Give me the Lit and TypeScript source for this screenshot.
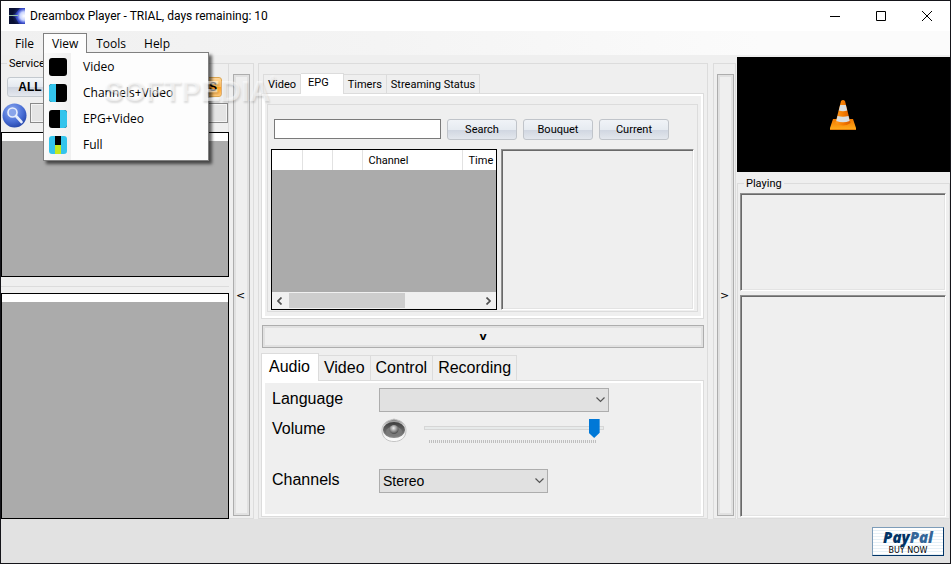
import { LitElement, html, css, svg, nothing } from "lit";
import { customElement, state } from "lit/decorators.js";
import { classMap } from "lit/directives/class-map.js";

const viewItems = [
  { label: "Video", icon: svg`<rect width="18" height="18" rx="3" fill="#000"/>` },
  {
    label: "Channels+Video",
    icon: svg`<rect width="18" height="18" rx="3" fill="#000"/><path d="M3 0h4v18H3a3 3 0 0 1-3-3V3a3 3 0 0 1 3-3z" fill="#33c4ec"/>`,
  },
  {
    label: "EPG+Video",
    icon: svg`<rect width="18" height="18" rx="3" fill="#000"/><path d="M11 0h4a3 3 0 0 1 3 3v12a3 3 0 0 1-3 3h-4z" fill="#33c4ec"/>`,
  },
  {
    label: "Full",
    icon: svg`<rect width="18" height="18" rx="3" fill="#33c4ec"/><path d="M6 0h6v9H6z" fill="#000"/><path d="M6 9h6v9H6z" fill="#c4e81e"/>`,
  },
];

const chevron = html`<svg class="chev" width="9" height="6" viewBox="0 0 9 6"><path d="M.5 .5l4 4 4-4" fill="none" stroke="#555" stroke-width="1.2"/></svg>`;

@customElement("app-root")
export class AppRoot extends LitElement {
  @state() private epgTab = "EPG";
  @state() private settingsTab = "Audio";
  @state() private menuOpen = true;

  static styles = css`
    :host { display: block; }
    * { box-sizing: border-box; }
    button, input, select { font: inherit; color: inherit; margin: 0; padding: 0; border-radius: 0; }
    button { background: none; border: 0; white-space: nowrap; }
    svg { display: block; flex: none; }
    fieldset { margin: 0; min-width: 0; border: 1px solid #dcdcdc; padding: 0; }
    legend { padding: 0 2px; margin-left: 6px; line-height: 13px; }

    .window {
      position: relative; display: flex; flex-direction: column; min-height: 100vh;
      border: 1px solid #15151a; background: #efefef; color: #000;
      font: 11px/13px Roboto, "Liberation Sans", sans-serif;
    }
    .titlebar {
      display: flex; align-items: center; height: 30px; padding-left: 8px; background: #fff;
      font: 12px/16px Roboto, "Liberation Sans", sans-serif;
    }
    .title { flex: 1; margin: 0 0 0 5px; font: inherit; }
    .caption { display: grid; place-items: center; width: 46px; height: 30px; }
    .menubar {
      display: flex; height: 24px; padding: 2px 5px;
      background: linear-gradient(90deg, #f0f0f0, #f4f4f4 40%, #fbfbfb 80%);
      font: 12px/16px "Open Sans", "Noto Sans", sans-serif;
    }
    .menu { position: relative; }
    .menu-title { height: 20px; padding: 0 8px; border: 1px solid transparent; border-width: 1px 1px 0; }
    .menu-title.open { background: #fdfdfd; border-color: #808080; position: relative; z-index: 3; }
    .dropdown {
      position: absolute; z-index: 2; left: 0; top: 19px; width: 166px; padding: 1px 0 2px;
      border: 1px solid #808080; box-shadow: 3px 3px 3px #0009;
      background: linear-gradient(90deg, #fafafa, #f0f0f0 27px, #fdfdfd 27px);
    }
    .dropdown button { display: flex; align-items: center; gap: 16px; width: 100%; height: 26px; padding-left: 5px; }
    .watermark {
      position: absolute; z-index: 4; left: 103px; top: 74px; pointer-events: none;
      font: bold 29px/32px "Liberation Sans", sans-serif; color: #ffffff80; text-shadow: 1px 2px 2px #0002;
    }
    .watermark sup { font-size: 8px; line-height: 8px; vertical-align: top; }

    .body { flex: 1; display: grid; grid-template-columns: 253px minmax(0, 1fr) 24px minmax(0, 214px); }
    .left { display: flex; }
    .services { flex: 1; display: flex; flex-direction: column; }
    .services-group { margin-top: 2px; border-width: 1px 1px 0 0; }
    .services-group .grid { height: 145px; margin-right: -1px; }
    .filters { display: flex; justify-content: space-between; padding: 7px 6px 0; }
    .filter {
      width: 46px; height: 20px; border: 1px solid #c3c9cf; border-radius: 3px;
      background: linear-gradient(#f3f6f9, #e4e9f0 50%, #cdd3df 50%, #e4e8ee);
      font: bold 12px/18px "Liberation Sans", sans-serif;
    }
    .filter.hot { border-color: #dca650; background: linear-gradient(#ffd699, #ffbb55 50%, #ff9e1c 50%, #ffc978); text-align: right; padding-right: 4px; }
    .find { display: flex; align-items: flex-start; gap: 3px; padding: 6px 0 4px 1px; }
    .find input { flex: 1; min-width: 0; height: 20px; border: 1px solid #8a8a8a; background: #e4e4e4; box-shadow: inset 0 0 0 1px #f4f4f4; }
    .find button { height: 25px; }
    .grid { flex: 1; display: flex; flex-direction: column; background: #ababab; border: 1px solid #000; }
    .grid-head { height: 8px; background: #fff; }
    .channels { flex: 1; display: flex; flex-direction: column; margin-top: 9px; border-top: 1px solid #dcdcdc; padding-top: 6px; }

    .splitter { display: flex; margin-top: 8px; border: 1px solid #dcdcdc; border-left: 0; padding: 10px 3px 2px 4px; }
    .splitter.right { border: 1px solid #dcdcdc; padding: 10px 2px 2px 3px; }
    .bar {
      flex: 1; width: 17px; background: #efefef; border: 1px solid #adadad; box-shadow: inset 0 0 0 2px #e1e1e1;
      font: 11px/13px "DejaVu Sans", sans-serif;
    }
    .splitter .bar { padding-right: 2px; }
    .wide { flex: none; width: auto; height: 23px; margin: 6px 0 5px 1px; font-weight: bold; }

    .center { display: flex; flex-direction: column; margin: 8px 4px 0; border: 1px solid #dcdcdc; padding: 9px 3px 1px 2px; }
    .tabs { display: flex; align-items: flex-end; padding-left: 2px; }
    .tab { height: 19px; padding: 0 4px; border: 1px solid #dcdcdc; border-width: 1px 1px 0 0; }
    .tab:first-child { border-left-width: 1px; }
    .tab.active {
      position: relative; z-index: 1; height: 21px; margin-bottom: -1px; padding: 0 14px 3px 7px; background: #fff;
    }
    .tab-page { border: 1px solid #dcdcdc; box-shadow: inset 3px 0 #fff, inset 0 2px #fff, inset -2px -2px #fff; }
    .epg { height: 226px; padding: 10px 5px 6px; }
    .epg-inner { height: 100%; display: flex; flex-direction: column; gap: 9px; border: 1px solid #dcdcdc; padding: 14px 3px 1px; }
    .epg-search { display: flex; gap: 6px; padding-left: 3px; }
    .epg-search input { width: 167px; height: 20px; border: 1px solid #7a7a7a; background: #fff; }
    .push {
      width: 70px; height: 21px; border: 1px solid #c0c4ca; border-radius: 3px;
      background: linear-gradient(#f0f3f7, #e6ebf1 50%, #cfd5e0 50%, #e3e7ed);
    }
    .epg-split { flex: 1; display: flex; gap: 4px; }
    .epg-grid { flex: 0 0 226px; }
    table { border-collapse: collapse; table-layout: fixed; width: 100%; height: 20px; background: #fff; }
    th { padding: 0 0 0 6px; font-weight: normal; text-align: left; border-right: 1px solid #e2e2e2; white-space: nowrap; }
    th:last-child { border-right: 0; }
    .c1 { width: 30px; } .c2 { width: 100px; }
    .hscroll { display: flex; align-items: center; height: 17px; margin-top: auto; background: #f0f0f0; padding: 0 5px; }
    .hscroll-thumb { width: 116px; height: 15px; margin: 0 auto 0 7px; background: #cdcdcd; }
    .sunken { flex: 1; background: #efefef; border: 1px solid #a0a0a0; border-color: #8f8f8f #fff #fff #8f8f8f; box-shadow: inset 1px 1px #696969, inset -1px -1px #e3e3e3; }

    .settings { display: flex; flex-direction: column; flex: 1; font: 16px/20px "Liberation Sans", sans-serif; }
    .settings .tabs { padding-left: 0; }
    .settings .tab { height: 25px; padding: 0 5px; }
    .settings .tab.active { height: 28px; padding: 0 8px 1px 7px; }
    .form { flex: 1; display: grid; grid-template-columns: 107px minmax(0, 1fr); grid-template-rows: 30px 51px 30px; align-items: start; padding: 7px 10px; }
    .form label { line-height: 22px; }
    .combo { display: grid; align-items: center; width: 230px; }
    .combo.short { width: 169px; }
    .combo select {
      grid-area: 1 / 1; width: 100%; height: 24px; padding: 0 3px; appearance: none;
      background: #e1e1e1; border: 1px solid #adadad; font-size: 14px;
    }
    .chev { grid-area: 1 / 1; justify-self: end; margin-right: 4px; pointer-events: none; }
    .volume { display: flex; align-items: flex-start; gap: 17px; padding-left: 2px; }
    .slider { width: 180px; }
    .slider input { display: block; width: 100%; height: 20px; appearance: none; background: none; }
    .slider input::-webkit-slider-runnable-track { height: 4px; background: #e7eaea; border: 1px solid #d6d6d6; }
    .slider input::-webkit-slider-thumb {
      appearance: none; width: 11px; height: 19px; margin-top: -8px; background: #0078d7;
      clip-path: polygon(0 0, 100% 0, 100% 72%, 50% 100%, 0 72%);
    }
    .ticks { height: 3px; margin: 2px 7px 0 5px; background: repeating-linear-gradient(90deg, #bfbfbf 0 1px, transparent 1px 2px); }

    .right { display: flex; flex-direction: column; margin-left: 1px; }
    .video { display: grid; place-items: center; height: 115px; margin-top: 2px; padding-right: 2px; background: #000; }
    .playing { flex: 1; display: flex; flex-direction: column; margin-top: 5px; }
    .playing legend { margin-left: 6px; }
    .playing-inner { flex: 1; display: flex; flex-direction: column; gap: 4px; padding: 3px 3px 1px 2px; }
    .now { flex: 0 0 98px; }

    .footer { display: flex; justify-content: flex-end; align-items: flex-start; height: 44px; padding: 8px 6px; background: #e2e2e2; }
    .paypal {
      display: flex; flex-direction: column; align-items: center; width: 72px; height: 29px;
      border: 1px solid #1d4d7d; border-color: #7e9db9 #003366 #003366 #7e9db9;
      background: repeating-linear-gradient(#fff 0 2px, #e6f0f6 2px 3px); text-decoration: none; color: #000;
      font: 8px/9px "DejaVu Sans", sans-serif;
    }
    .paypal strong { font: italic 800 15px/18px "Open Sans", sans-serif; color: #003366; }
    .paypal strong span { color: #336699; }
  `;

  private tabs(names: string[], current: string, pick: (n: string) => void) {
    return html`<div class="tabs" role="tablist">
      ${names.map(
        (n) => html`<button role="tab" class=${classMap({ tab: true, active: n === current })}
          aria-selected=${n === current ? "true" : "false"} @click=${() => pick(n)}>${n}</button>`
      )}
    </div>`;
  }

  private viewMenu() {
    return html`<div class="dropdown" role="menu">
      ${viewItems.map(
        (i) => html`<button role="menuitem"><svg width="18" height="18">${i.icon}</svg>${i.label}</button>`
      )}
    </div>`;
  }

  render() {
    return html`<div class="window">
      <header class="titlebar">
        <svg width="16" height="16" viewBox="0 0 16 16">
          <defs><radialGradient id="glow" cx=".95" cy=".5" r=".75"><stop offset="0" stop-color="#fff"/><stop offset=".35" stop-color="#c8d4ff"/><stop offset=".6" stop-color="#3c50d0"/><stop offset="1" stop-color="#0a1038"/></radialGradient></defs>
          <rect width="16" height="16" fill="url(#glow)"/><path d="M0 7h9v1H0z" fill="#9cc8a8"/><path d="M0 0h11L6 6H0zM0 9h6l4 7H0z" fill="#081030" opacity=".6"/>
        </svg>
        <h1 class="title">Dreambox Player - TRIAL, days remaining: 10</h1>
        <button class="caption" aria-label="Minimize"><svg width="10" height="10"><path d="M0 5.5h10" stroke="#000"/></svg></button>
        <button class="caption" aria-label="Maximize"><svg width="10" height="10"><path d="M.5 .5h9v9h-9z" fill="none" stroke="#000"/></svg></button>
        <button class="caption" aria-label="Close"><svg width="10" height="10"><path d="M0 0l10 10M10 0L0 10" stroke="#000"/></svg></button>
      </header>
      <nav class="menubar">
        ${["File", "View", "Tools", "Help"].map((m) => {
          const open = m === "View" && this.menuOpen;
          return html`<div class="menu">
            <button class=${classMap({ "menu-title": true, open })}
              @click=${() => { if (m === "View") this.menuOpen = !this.menuOpen; }}>${m}</button>
            ${open ? this.viewMenu() : nothing}
          </div>`;
        })}
      </nav>
      <main class="body">
        <section class="left">
          <div class="services">
            <fieldset class="services-group">
              <legend>Services</legend>
              <div class="filters"><button class="filter">ALL</button><button class="filter hot">S</button></div>
              <div class="find">
                <button aria-label="Find service">
                  <svg width="25" height="25" viewBox="0 0 25 25">
                    <defs><radialGradient id="orb" cx=".4" cy=".3" r=".75"><stop offset="0" stop-color="#8eabf0"/><stop offset=".6" stop-color="#4a6fd6"/><stop offset="1" stop-color="#2343a8"/></radialGradient></defs>
                    <circle cx="12.5" cy="12.5" r="12" fill="url(#orb)"/>
                    <circle cx="10.5" cy="9.5" r="4.5" fill="#8aa5ea" stroke="#e8eefc" stroke-width="1.6"/>
                    <path d="M14 13l5.5 6" stroke="#e8eefc" stroke-width="2.6" stroke-linecap="round"/>
                  </svg>
                </button>
                <input type="text" aria-label="Service name" />
              </div>
              <div class="grid"><div class="grid-head"></div></div>
            </fieldset>
            <div class="channels"><div class="grid"><div class="grid-head"></div></div></div>
          </div>
          <div class="splitter"><button class="bar">&lt;</button></div>
        </section>

        <section class="center">
          ${this.tabs(["Video", "EPG", "Timers", "Streaming Status"], this.epgTab, (n) => (this.epgTab = n))}
          <div class="tab-page epg">
            <div class="epg-inner">
              <div class="epg-search">
                <input type="text" aria-label="Search programmes" />
                <button class="push">Search</button><button class="push">Bouquet</button><button class="push">Current</button>
              </div>
              <div class="epg-split">
                <div class="grid epg-grid">
                  <table>
                    <colgroup><col class="c1" /><col class="c1" /><col class="c1" /><col class="c2" /><col /></colgroup>
                    <thead><tr><th></th><th></th><th></th><th scope="col">Channel</th><th scope="col">Time</th></tr></thead>
                  </table>
                  <div class="hscroll">
                    <svg width="5" height="8" viewBox="0 0 5 8"><path d="M4.5 .5L1 4l3.500 3.500" fill="none" stroke="#505050" stroke-width="1.700"/></svg>
                    <div class="hscroll-thumb"></div>
                    <svg width="5" height="8" viewBox="0 0 5 8"><path d="M.5 .5L4 4 .5 7.500" fill="none" stroke="#505050" stroke-width="1.700"/></svg>
                  </div>
                </div>
                <div class="sunken"></div>
              </div>
            </div>
          </div>
          <button class="bar wide">v</button>
          <div class="settings">
            ${this.tabs(["Audio", "Video", "Control", "Recording"], this.settingsTab, (n) => (this.settingsTab = n))}
            <div class="tab-page form">
              <label for="language">Language</label>
              <div class="combo"><select id="language"><option></option></select>${chevron}</div>
              <label for="volume">Volume</label>
              <div class="volume">
                <svg width="26" height="26" viewBox="0 0 26 26">
                  <defs>
                    <linearGradient id="rim" x2="0" y2="1"><stop offset="0" stop-color="#777"/><stop offset=".3" stop-color="#ddd"/><stop offset="1" stop-color="#fff"/></linearGradient>
                    <linearGradient id="well" x2="0" y2="1"><stop offset="0" stop-color="#3c3c3c"/><stop offset="1" stop-color="#8c8c8c"/></linearGradient>
                    <radialGradient id="dome" cx=".45" cy=".35" r=".6"><stop offset="0" stop-color="#eee"/><stop offset="1" stop-color="#555"/></radialGradient>
                  </defs>
                  <path d="M8 2.500l5-1.500 5 1.500c5 2 7 5.500 7 10 0 7-5 11-12 11S1 19.500 1 12.500C1 8 3 4.500 8 2.500z" fill="url(#rim)" stroke="#c4c4c4"/>
                  <ellipse cx="13" cy="12" rx="11" ry="8" fill="url(#well)"/>
                  <ellipse cx="13" cy="13.500" rx="8" ry="5" fill="#7a7a7a"/>
                  <circle cx="13" cy="11.500" r="4.500" fill="url(#dome)"/>
                </svg>
                <div class="slider">
                  <input id="volume" type="range" min="0" max="100" .value=${"98"} />
                  <div class="ticks"></div>
                </div>
              </div>
              <label for="channels">Channels</label>
              <div class="combo short"><select id="channels"><option>Stereo</option></select>${chevron}</div>
            </div>
          </div>
        </section>

        <div class="splitter right"><button class="bar">&gt;</button></div>

        <section class="right">
          <div class="video">
            <svg width="28" height="32" viewBox="0 0 28 32">
              <defs>
                <linearGradient id="cone"><stop offset="0" stop-color="#ff9a1e"/><stop offset=".5" stop-color="#f57c00"/><stop offset="1" stop-color="#d85a00"/></linearGradient>
                <linearGradient id="base" x2="0" y2="1"><stop offset="0" stop-color="#f07800"/><stop offset=".9" stop-color="#ffa81a"/><stop offset="1" stop-color="#c86000"/></linearGradient>
              </defs>
              <path d="M4 20h20l3 9v2H1v-2z" fill="url(#base)"/>
              <path d="M6.500 24L12 2q2-2 4 0l5.500 22q-7.500 5-15 0z" fill="url(#cone)"/>
              <path d="M11.200 6h5.600l1.400 5.500q-4.200 1.500-8.400 0zM8.500 17q5.500 1.500 11 0l1.200 5q-6.700 2.500-13.400 0z" fill="#d9dde0"/>
            </svg>
          </div>
          <fieldset class="playing">
            <legend>Playing</legend>
            <div class="playing-inner"><div class="sunken now"></div><div class="sunken"></div></div>
          </fieldset>
        </section>
      </main>
      <footer class="footer">
        <a class="paypal" href="#buy"><strong>Pay<span>Pal</span></strong>BUY NOW</a>
      </footer>
      <div class="watermark" aria-hidden="true">SOFTPEDIA<sup>®</sup></div>
    </div>`;
  }
}
